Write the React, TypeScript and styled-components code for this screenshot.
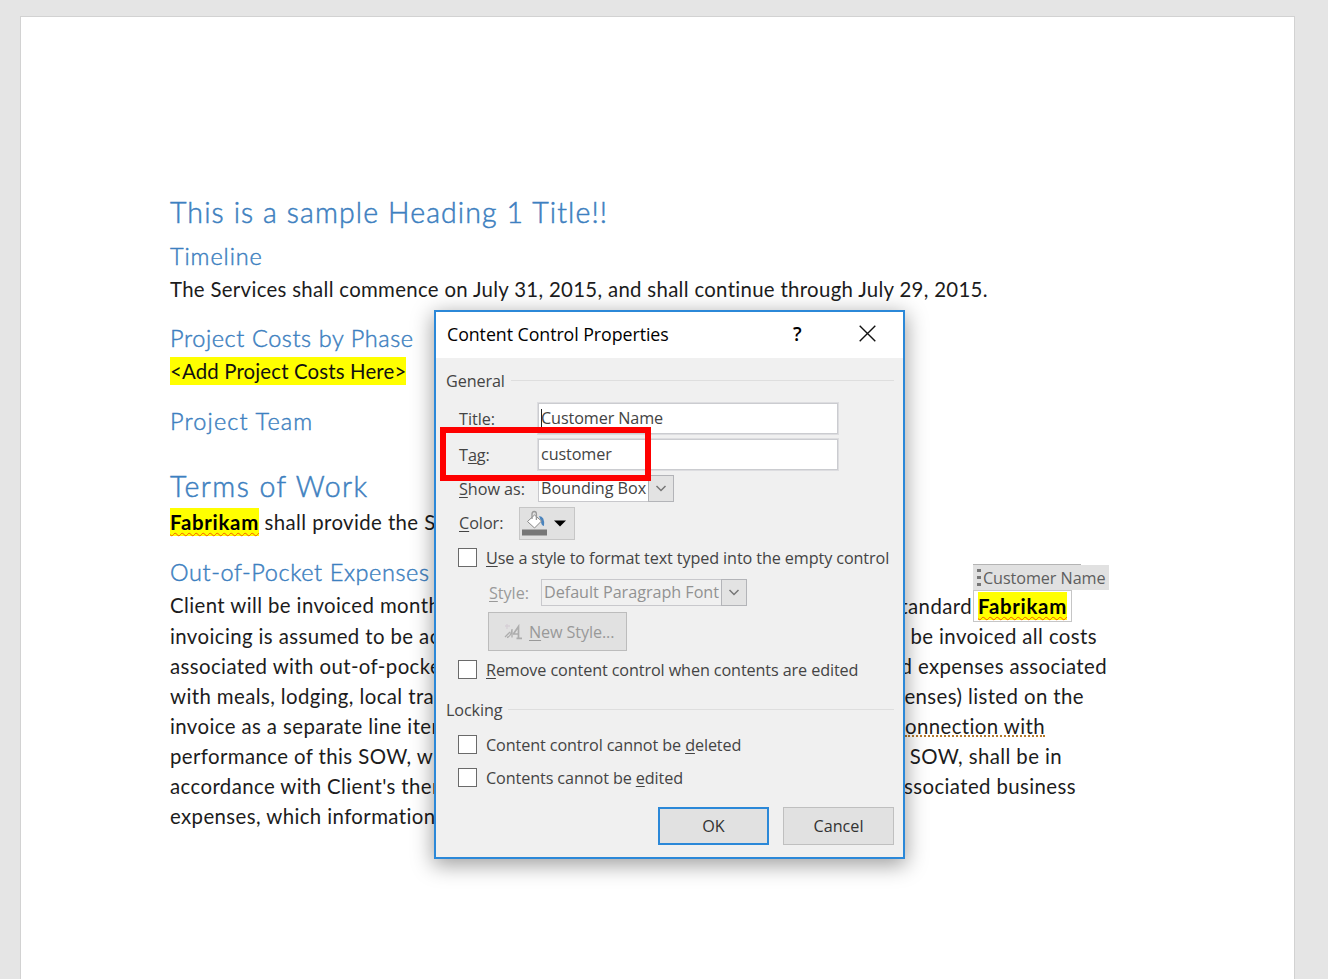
import React from 'react';
import styled, { createGlobalStyle } from 'styled-components';

const GlobalStyle = createGlobalStyle`
  * { box-sizing: border-box; }
  body { margin: 0; background: #e5e5e5; }
`;

const docFont = `Lato, "Liberation Sans", sans-serif`;
const uiFont = `"Open Sans", "Liberation Sans", sans-serif`;

const Workspace = styled.div`
  position: relative;
  width: 1328px;
  height: 979px;
  padding: 16px 0 0 20px;
  overflow: hidden;
  background: #e5e5e5;
`;

const Page = styled.main`
  width: 1275px;
  height: 980px;
  padding: 175px 149px 0;
  background: #fff;
  border: 1px solid #d2d2d2;
  font-family: ${docFont};
  font-variant-ligatures: none;
  color: #1c1c1c;
`;

const Heading = styled.h1<{ $top?: number; $track?: number }>`
  height: 41px;
  margin: ${p => p.$top ?? 0}px 0 0;
  font-size: 28.5px;
  line-height: 40px;
  font-weight: 300;
  color: #3d80c0;
  white-space: nowrap;
  letter-spacing: ${p => p.$track ?? 0}px;
  -webkit-text-stroke: 0.5px #3d80c0;
`;

const Subheading = styled.h2<{ $top?: number; $track?: number }>`
  height: 34px;
  margin: ${p => p.$top ?? 0}px 0 0;
  font-size: 23.5px;
  line-height: 32px;
  font-weight: 300;
  color: #3d80c0;
  white-space: nowrap;
  letter-spacing: ${p => p.$track ?? 0}px;
  -webkit-text-stroke: 0.45px #3d80c0;
`;

const Line = styled.div<{ $width?: number }>`
  display: flex;
  justify-content: space-between;
  width: ${p => (p.$width ? `${p.$width}px` : 'auto')};
  height: 30.15px;
  font-size: 20.4px;
  line-height: 30px;
  white-space: nowrap;
`;

const Run = styled.span<{ $track?: number }>`
  letter-spacing: ${p => p.$track ?? 0.4}px;
`;

const Marked = styled.mark<{ $track?: number }>`
  display: inline-block;
  height: 28px;
  margin-top: 1px;
  line-height: 28px;
  background: #ff0;
  color: #111;
  letter-spacing: ${p => p.$track ?? 0.15}px;
`;

const Misspelled = styled(Marked)`
  font-weight: 700;
  color: #000;
  letter-spacing: 0.72px;
  text-decoration: underline wavy #f65a00 1.4px;
  text-underline-offset: 1.5px;
  text-decoration-skip-ink: none;
`;

const Grammar = styled(Run)`
  height: 26px;
  line-height: 30px;
  border-bottom: 2px dotted #b5792a;
`;

const Control = styled.span`
  position: relative;
  display: inline-block;
  width: 99px;
  height: 32px;
  margin-left: 1px;
  padding: 0 0 0 4px;
  border: 1px solid #c6c6c6;
`;

const ControlTag = styled.span`
  position: absolute;
  left: -1px;
  top: -26px;
  display: flex;
  align-items: center;
  gap: 1px;
  width: 136px;
  height: 25px;
  padding-left: 4px;
  background: #e1e1e1;
  color: #5e5e5e;
  font: 16.2px/25px ${uiFont};
  letter-spacing: -0.08px;

  &::before {
    content: '';
    position: absolute;
    left: 0;
    top: -1px;
    width: 108px;
    height: 1px;
    background: #b4b4b4;
  }

  span { padding-top: 2px; }
`;

const Dialog = styled.section`
  position: absolute;
  left: 434px;
  top: 310px;
  width: 471px;
  height: 549px;
  border: 2px solid #2b88d8;
  background: #f0f0f0;
  box-shadow: 0 5px 20px 1px rgba(0, 0, 0, 0.38);
  font-family: ${uiFont};
  font-size: 16.2px;
  letter-spacing: -0.11px;
  color: #444;
`;

const TitleBar = styled.header`
  display: flex;
  align-items: center;
  height: 46px;
  padding: 0 0 3px 11px;
  background: #fff;
  color: #000;
  font-size: 17.8px;
`;

const DialogTitle = styled.span`
  width: 345px;
  letter-spacing: -0.06px;
  white-space: nowrap;
`;

const HelpMark = styled.span`
  width: 67px;
  padding-left: 1px;
  font-size: 19px;
  font-weight: 600;
`;

const Group = styled.div<{ $top: number }>`
  display: flex;
  align-items: center;
  gap: 6px;
  height: 24px;
  margin: ${p => p.$top}px 9px 0 10px;

  &::after {
    content: '';
    flex: 1;
    height: 1px;
    margin-top: -2px;
    background: #dedede;
  }
`;

const Row = styled.div<{ $height: number; $top?: number; $indent?: number }>`
  display: flex;
  align-items: center;
  height: ${p => p.$height}px;
  margin: ${p => p.$top ?? 0}px 0 0 ${p => p.$indent ?? 22}px;
  white-space: nowrap;
`;

const Label = styled.span<{ $width: number; $muted?: boolean }>`
  width: ${p => p.$width}px;
  padding: 0 0 0 1px;
  color: ${p => (p.$muted ? '#9a9a9a' : 'inherit')};
  letter-spacing: -0.05px;
`;

const Field = styled.div`
  width: 300px;
  height: 31px;
  padding-left: 2px;
  border: 1px solid #cbccd0;
  outline: 0.5px solid #dddde0;
  background: #fff;
  line-height: 28px;
`;

const Caret = styled.i`
  display: inline-block;
  width: 1px;
  height: 22px;
  margin-right: -1px;
  vertical-align: middle;
  background: #222;
`;

const Combo = styled.div<{ $width: number; $muted?: boolean }>`
  display: flex;
  width: ${p => p.$width}px;
  height: 27px;
  padding-left: 2px;
  border: 1px solid #c8c8cc;
  background: ${p => (p.$muted ? '#f0f0f0' : '#fff')};
  color: ${p => (p.$muted ? '#929292' : 'inherit')};
  line-height: 25px;
  letter-spacing: -0.04px;
`;

const ComboButton = styled.span`
  display: flex;
  align-items: center;
  justify-content: center;
  width: 26px;
  height: 27px;
  margin: -1px -1px 0 auto;
  border: 1.5px solid #b3b4b8;
  background: #e3e3e3;
`;

const ColorButton = styled.div`
  display: flex;
  align-items: center;
  width: 56px;
  height: 33px;
  margin-left: 1px;
  padding: 1px 0 0 2px;
  border: 1px solid #c6c6c6;
  background: #e1e1e1;
`;

const StyleButton = styled.div`
  display: flex;
  align-items: center;
  gap: 7px;
  width: 139px;
  height: 39px;
  padding: 0 0 0 15px;
  border: 1px solid #bcbcbc;
  background: #e1e1e1;
  color: #999;
`;

const CheckBox = styled.span`
  width: 19px;
  height: 19px;
  margin: -2px 9px 0 0;
  border: 1.5px solid #6a6a6a;
  background: #fff;
`;

const Key = styled.u`
  text-decoration-thickness: 1px;
  text-underline-offset: 2px;
  text-decoration-skip-ink: none;
`;

const Actions = styled.footer`
  display: flex;
  justify-content: flex-end;
  gap: 14px;
  margin: 17px 9px 0 0;
`;

const Button = styled.button<{ $primary?: boolean }>`
  width: 111px;
  height: 38px;
  padding: 0;
  border: ${p => (p.$primary ? '2px solid #2b88d8' : '1px solid #bfbfbf')};
  background: #e1e1e1;
  color: #333;
  font: 16.2px ${uiFont};
  letter-spacing: 0;
`;

const Highlight = styled.div`
  position: absolute;
  left: 440px;
  top: 427px;
  width: 211px;
  height: 54px;
  border: 6px solid #fe0000;
`;

const Chevron = () => (
  <svg width="14" height="10" viewBox="0 0 14 10" fill="none" stroke="#777" strokeWidth="1.5">
    <path d="M2.500 2l4.500 4.500L11.500 2" />
  </svg>
);

const CloseIcon = () => (
  <svg width="17" height="17" viewBox="0 0 17 17" stroke="#111" strokeWidth="1.4">
    <path d="M.7.7l15.6 15.6M16.3.7L.7 16.3" />
  </svg>
);

const PaintBucket = () => (
  <svg width="44" height="28" viewBox="0 0 44 28">
    <path d="M17 6q6 0 5 10-3-.5-3-5z" fill="#4b84bd" />
    <path d="M5.500 11.500L12.500 5l7 6-7 7z" fill="#fff" stroke="#888" strokeWidth="1" />
    <path d="M10 9V4q0-2.500 2.200-2.500T14.400 4v6" fill="none" stroke="#999" strokeWidth="1.300" />
    <path d="M0 19.500h25v6H0z" fill="#777" />
    <path d="M32 10.500h12l-6 6z" fill="#000" />
  </svg>
);

const StyleIcon = () => (
  <svg width="18" height="16" viewBox="0 0 18 16" fill="none" stroke="#adadad" strokeWidth="1.3">
    <path d="M1 2h5M3 0v5" stroke="#d6cfd6" />
    <path d="M1 13l5-5M3 13.500q4-1 5-8.500v8.500" />
    <path d="M9 10.500l5.500-8v11.500M10 10h5M12.500 14.300H18" strokeWidth="1.700" />
  </svg>
);

const Grip = () => (
  <svg width="5" height="18" viewBox="0 0 5 18" fill="#777">
    <path d="M0 0h4v3H0zM0 7h4v3H0zM0 14h4v3H0z" />
  </svg>
);

const clauses = [
  { left: 'invoicing is assumed to be ac', right: 'be invoiced all costs', end: 1097 },
  { left: 'associated with out-of-pocke', right: 'd expenses associated', end: 1107 },
  { left: 'with meals, lodging, local tra', right: 'enses) listed on the', end: 1084 },
  { left: 'invoice as a separate line iter', right: 'onnection with', end: 1045, grammar: true },
  { left: 'performance of this SOW, wh', right: 's SOW, shall be in', end: 1062 },
  { left: "accordance with Client's then", right: 'ssociated business', end: 1076 },
  { left: 'expenses, which information', right: '', end: 1076 },
];

export default function App() {
  return (
    <Workspace>
      <GlobalStyle />
      <Page>
        <Heading $track={1.1}>This is a sample Heading 1 Title!!</Heading>
        <Subheading $top={7} $track={0.9}>Timeline</Subheading>
        <Line>
          <Run $track={0.31}>The Services shall commence on July 31, 2015, and shall continue through July 29, 2015.</Run>
        </Line>
        <Subheading $top={18} $track={0.6}>Project Costs by Phase</Subheading>
        <Line>
          <Marked>&lt;Add Project Costs Here&gt;</Marked>
        </Line>
        <Subheading $top={19} $track={1.15}>Project Team</Subheading>
        <Heading $top={27} $track={1.45}>Terms of Work</Heading>
        <Line>
          <Run>
            <Misspelled>Fabrikam</Misspelled> shall provide the S
          </Run>
        </Line>
        <Subheading $top={19} $track={0.6}>Out-of-Pocket Expenses</Subheading>
        <Line $width={902}>
          <Run>Client will be invoiced month</Run>
          <span>
            <Run>standard</Run>
            <Control>
              <ControlTag><Grip /><span>Customer Name</span></ControlTag>
              <Misspelled>Fabrikam</Misspelled>
            </Control>
          </span>
        </Line>
        {clauses.map(c => (
          <Line key={c.left} $width={c.end - 170}>
            <Run>{c.left}</Run>
            {c.grammar ? <Grammar>{c.right}</Grammar> : <Run>{c.right}</Run>}
          </Line>
        ))}
      </Page>

      <Dialog>
        <TitleBar>
          <DialogTitle>Content Control Properties</DialogTitle>
          <HelpMark>?</HelpMark>
          <CloseIcon />
        </TitleBar>
        <Group $top={11}>General</Group>
        <Row $height={31} $top={10}>
          <Label $width={80}><Key>T</Key>itle:</Label>
          <Field><Caret />Customer Name</Field>
        </Row>
        <Row $height={31} $top={5}>
          <Label $width={80}>T<Key>a</Key>g:</Label>
          <Field>customer</Field>
        </Row>
        <Row $height={27} $top={5}>
          <Label $width={80}><Key>S</Key>how as:</Label>
          <Combo $width={136}>Bounding Box<ComboButton><Chevron /></ComboButton></Combo>
        </Row>
        <Row $height={32} $top={5}>
          <Label $width={60}><Key>C</Key>olor:</Label>
          <ColorButton><PaintBucket /></ColorButton>
        </Row>
        <Row $height={24} $top={7}>
          <CheckBox />
          <span><Key>U</Key>se a style to format text typed into the empty control</span>
        </Row>
        <Row $height={27} $top={9} $indent={52}>
          <Label $width={53} $muted><Key>S</Key>tyle:</Label>
          <Combo $width={206} $muted>Default Paragraph Font<ComboButton><Chevron /></ComboButton></Combo>
        </Row>
        <Row $height={39} $top={6} $indent={52}>
          <StyleButton><StyleIcon /><span><Key>N</Key>ew Style...</span></StyleButton>
        </Row>
        <Row $height={24} $top={7}>
          <CheckBox />
          <span><Key>R</Key>emove content control when contents are edited</span>
        </Row>
        <Group $top={16}>Locking</Group>
        <Row $height={24} $top={11}>
          <CheckBox />
          <span>Content control cannot be <Key>d</Key>eleted</span>
        </Row>
        <Row $height={24} $top={9}>
          <CheckBox />
          <span>Contents cannot be <Key>e</Key>dited</span>
        </Row>
        <Actions>
          <Button $primary>OK</Button>
          <Button>Cancel</Button>
        </Actions>
      </Dialog>
      <Highlight />
    </Workspace>
  );
}
